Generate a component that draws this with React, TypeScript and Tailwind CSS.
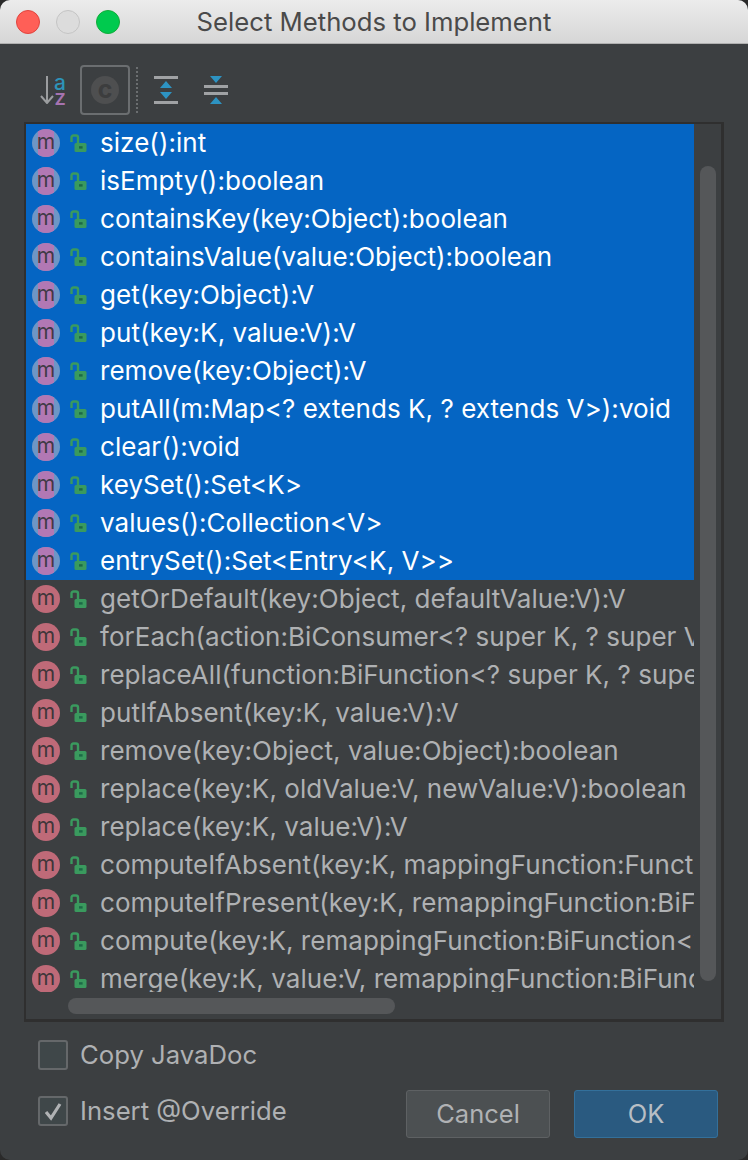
import React from "react";

const selected = [
  "size():int",
  "isEmpty():boolean",
  "containsKey(key:Object):boolean",
  "containsValue(value:Object):boolean",
  "get(key:Object):V",
  "put(key:K, value:V):V",
  "remove(key:Object):V",
  "putAll(m:Map<? extends K, ? extends V>):void",
  "clear():void",
  "keySet():Set<K>",
  "values():Collection<V>",
  "entrySet():Set<Entry<K, V>>",
];
const rest = [
  "getOrDefault(key:Object, defaultValue:V):V",
  "forEach(action:BiConsumer<? super K, ? super V>):void",
  "replaceAll(function:BiFunction<? super K, ? super V, ? extends V>):void",
  "putIfAbsent(key:K, value:V):V",
  "remove(key:Object, value:Object):boolean",
  "replace(key:K, oldValue:V, newValue:V):boolean",
  "replace(key:K, value:V):V",
  "computeIfAbsent(key:K, mappingFunction:Function<? super K, ? extends V>):V",
  "computeIfPresent(key:K, remappingFunction:BiFunction<? super K, ? super V, ? extends V>):V",
  "compute(key:K, remappingFunction:BiFunction<? super K, ? super V, ? extends V>):V",
  "merge(key:K, value:V, remappingFunction:BiFunction<? super V, ? super V, ? extends V>):V",
];

function Lock() {
  return (
    <svg width="18" height="20" viewBox="0 0 18 20" className="mt-[2px] block shrink-0">
      <path d="M1.5 8V3.6C1.5 2.4 2.3 1.5 3.5 1.5H6C7.2 1.5 8 2.4 8 3.6V9" fill="none" stroke="#3a9a5e" strokeWidth="2.4" />
      <rect x="4.5" y="9" width="12" height="9" rx="1.5" fill="#3a9a5e" />
      <rect x="9" y="12.2" width="3.6" height="2.4" fill="#1c6a46" />
    </svg>
  );
}

function Row({ text, sel }: { text: string; sel: boolean }) {
  return (
    <div className={sel ? "flex h-[38px] w-[668px] items-center overflow-hidden bg-[#0565c3] text-white" : "flex h-[38px] w-[668px] items-center overflow-hidden text-[#afb1b3]"}>
      {sel ? (
        <div className="relative ml-[6px] flex h-7 w-7 shrink-0 items-center justify-center overflow-hidden rounded-full bg-[#6e96c6]">
          <div className="absolute inset-y-0 left-[6px] w-4 bg-[#b278b4]" />
          <span className="relative pb-[3px] text-[21px] leading-none text-[#3f3a46]">m</span>
        </div>
      ) : (
        <div className="ml-[6px] flex h-7 w-7 shrink-0 items-center justify-center rounded-full bg-[#bf6a78]">
          <span className="pb-[3px] text-[21px] leading-none text-[#40363a]">m</span>
        </div>
      )}
      <div className="ml-[10px] w-[18px] shrink-0">
        <Lock />
      </div>
      <span className="ml-[12px] whitespace-pre text-[26px] leading-[38px] tracking-[0.05px]">{text}</span>
    </div>
  );
}

export default function App() {
  return (
    <div className="h-[1160px] w-[748px] overflow-hidden bg-[#2a2a2a] font-['Inter','Liberation_Sans',sans-serif]">
      <div className="flex h-full flex-col overflow-hidden rounded-[10px] bg-[#3c3f41]">
        {/* Title bar */}
        <div className="relative flex h-[44px] shrink-0 items-center justify-center border-b-[1px] border-[#b0b0b0] bg-gradient-to-b from-[#ececec] to-[#d6d6d6]">
          <div className="absolute left-4 top-[10px] flex gap-4">
            <div className="h-6 w-6 rounded-full border border-[#e0443e] bg-[#ff5f57]" />
            <div className="h-6 w-6 rounded-full border border-[#c4c4c4] bg-[#dcdcdc]" />
            <div className="h-6 w-6 rounded-full border border-[#12ac3a] bg-[#00ca4e]" />
          </div>
          <span className="pt-[1px] text-[25.7px] leading-none text-[#4a4a4a]">Select Methods to Implement</span>
        </div>

        {/* Toolbar */}
        <div className="flex h-[78px] shrink-0 items-center pl-[40px] pt-[14px]">
          <div className="flex h-7 w-[26px] shrink-0 items-center justify-between">
            <svg width="14" height="28" viewBox="0 0 14 28" className="block shrink-0">
              <path d="M7 0V27M1 20L7 27L13 20" fill="none" stroke="#9b9d9f" strokeWidth="2" />
            </svg>
            <div className="flex flex-col items-center">
              <span className="h-[16px] text-[21px] font-medium leading-[14px] text-[#2d93b8]">a</span>
              <span className="h-[12px] text-[21px] font-medium leading-[12px] text-[#a673b0]">z</span>
            </div>
          </div>
          <div className="ml-[14px] flex h-[50px] w-[50px] shrink-0 items-center justify-center rounded-[4px] border-2 border-[#6b6e70]">
            <div className="flex h-7 w-7 items-center justify-center rounded-full bg-[#4e4f50] pb-[2px] text-[25px] font-bold leading-none text-[#3c3d3e]">c</div>
          </div>
          <div className="ml-[6px] h-[46px] border-l-2 border-dotted border-[#6b6e70]" />
          <svg width="24" height="28" viewBox="0 0 24 28" className="ml-[16px] shrink-0">
            <rect x="0" y="0" width="24" height="3" fill="#a0a2a4" />
            <rect x="0" y="25" width="24" height="3" fill="#a0a2a4" />
            <path d="M12 5L18 12H6Z M6 16H18L12 23Z" fill="#2d93c2" />
          </svg>
          <svg width="24" height="28" viewBox="0 0 24 28" className="ml-[26px] shrink-0">
            <rect x="0" y="9" width="24" height="3" fill="#a0a2a4" />
            <rect x="0" y="16" width="24" height="3" fill="#a0a2a4" />
            <path d="M6 0H18L12 7Z M12 21L18 28H6Z" fill="#2d93c2" />
          </svg>
        </div>

        {/* List */}
        <div className="relative mx-[24px] h-[900px] shrink-0 border-2 border-[#2f2f2f] border-b-[3px] border-r-[3px] bg-[#3c3f41]">
          <div className="h-[868px] w-[668px] overflow-hidden">
            {selected.map((t) => (
              <Row key={t} text={t} sel />
            ))}
            {rest.map((t, i) => (
              <Row key={t + i} text={t} sel={false} />
            ))}
          </div>
          <div className="absolute left-[674px] top-[42px] h-[815px] w-4 rounded-full bg-[#555759]" />
          <div className="absolute bottom-[5px] left-[42px] h-4 w-[327px] rounded-full bg-[#555759]" />
        </div>

        {/* Footer */}
        <div className="flex items-start justify-between pl-[38px] pr-[30px] pt-[18px]">
          <div className="flex flex-col gap-[26px]">
            <label className="flex h-[30px] items-center gap-[12px] text-[25.7px] leading-none text-[#afb1b3]">
              <span className="h-[30px] w-[30px] rounded-[3px] border-2 border-[#65686a] bg-[#3f4749]" />
              Copy JavaDoc
            </label>
            <label className="flex h-[30px] items-center gap-[12px] text-[25.7px] leading-none text-[#afb1b3]">
              <span className="flex h-[30px] w-[30px] items-center justify-center rounded-[3px] border-2 border-[#65686a] bg-[#3f4749]">
                <svg width="20" height="20" viewBox="0 0 20 20">
                  <path d="M3 11L8 17L17 3" fill="none" stroke="#b0b2b4" strokeWidth="3.2" />
                </svg>
              </span>
              Insert @Override
            </label>
          </div>
          <div className="mt-[50px] flex gap-6">
            <button className="h-12 w-[144px] rounded-[3px] border border-[#5e6163] bg-[#4c5052] text-[25.5px] leading-none text-[#b0b2b4]">Cancel</button>
            <button className="h-12 w-[144px] rounded-[3px] border border-[#33709b] bg-[#2a5a80] text-[25.5px] leading-none text-[#b8bec4]">OK</button>
          </div>
        </div>
      </div>
    </div>
  );
}
